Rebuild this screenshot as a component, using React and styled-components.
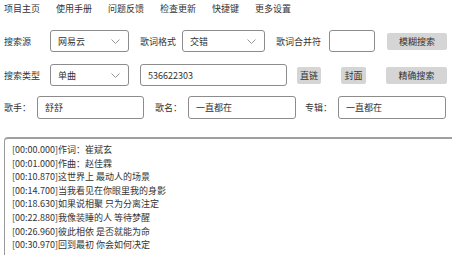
import React from "react"
import styled, { createGlobalStyle } from "styled-components"

const Global = createGlobalStyle`
body {
  margin: 0;
  background: #ffffff;
  overflow: hidden;
  font-family: "Noto Sans CJK SC", "Noto Sans", sans-serif;
  color: #333333;
}
`

const Page = styled.div`
width: 452px;
height: 255px;
overflow: hidden;
`

const Menu = styled.div`
display: flex;
gap: 16px;
padding-left: 4px;
height: 16px;
align-items: center;
font-size: 9px;
`

const Row = styled.div`
display: flex;
align-items: center;
padding-left: 4px;
height: ${p => p.h || 22}px;
margin-top: ${p => p.top}px;
`

const Label = styled.span`
width: ${p => p.w}px;
flex-shrink: 0;
font-size: 9px;
color: #333;
`

const SelectBox = styled.div`
box-sizing: border-box;
width: ${p => p.w}px;
height: 100%;
border: 1px solid #8c8c8c;
border-radius: 3px;
display: flex;
align-items: center;
justify-content: space-between;
padding: 0 8px 0 7px;
font-size: 9px;
margin-right: ${p => p.mr || 0}px;
flex-shrink: 0;
`

const Input = styled.div`
box-sizing: border-box;
width: ${p => p.w}px;
height: 100%;
border: 1px solid #8c8c8c;
border-radius: 3px;
display: flex;
align-items: center;
padding-left: 7px;
font-size: 9px;
margin-right: ${p => p.mr || 0}px;
flex-shrink: 0;
`

const Button = styled.div`
box-sizing: border-box;
width: ${p => p.w}px;
height: 17px;
background: #d5d5d5;
border-radius: 2px;
display: flex;
align-items: center;
justify-content: center;
font-size: 9px;
color: #333;
margin-right: ${p => p.mr || 0}px;
flex-shrink: 0;
`

const Lyrics = styled.div`
box-sizing: border-box;
margin: 18px 0 0 4px;
width: 460px;
height: 140px;
border: 1px solid #9a9a9a;
border-top: 2px solid #a0a0a0;
border-radius: 4px;
padding: 4px 0 0 7px;
font-size: 9px;
line-height: 13.6px;
color: #333;
`

const Chevron = () => (
  <svg width="9" height="5" viewBox="0 0 9 5">
    <path d="M0.5 0.5 L4.5 4.5 L8.5 0.5" fill="none" stroke="#8a8a8a" strokeWidth="0.9" />
  </svg>
)

const Select = ({ w, mr, children }) => (
  <SelectBox w={w} mr={mr}>
    <span>{children}</span>
    <Chevron />
  </SelectBox>
)

const lines = [
  "[00:00.000]作词：崔斌玄",
  "[00:01.000]作曲：赵佳霖",
  "[00:10.870]这世界上 最动人的场景",
  "[00:14.700]当我看见在你眼里我的身影",
  "[00:18.630]如果说相聚 只为分离注定",
  "[00:22.880]我像装睡的人 等待梦醒",
  "[00:26.960]彼此相依 是否就能为命",
  "[00:30.970]回到最初 你会如何决定",
]

export default function App() {
  return (
    <Page>
      <Global />
      <Menu>
        <span>项目主页</span>
        <span>使用手册</span>
        <span>问题反馈</span>
        <span>检查更新</span>
        <span>快捷键</span>
        <span>更多设置</span>
      </Menu>

      <Row top={14}>
        <Label w={46}>搜索源</Label>
        <Select w={79} mr={11}>网易云</Select>
        <Label w={42}>歌词格式</Label>
        <Select w={83} mr={11}>交错</Select>
        <Label w={53}>歌词合并符</Label>
        <Input w={46} mr={12} />
        <Button w={60}>模糊搜索</Button>
      </Row>

      <Row top={12}>
        <Label w={46}>搜索类型</Label>
        <Select w={79} mr={11}>单曲</Select>
        <Input w={147} mr={10}>536622303</Input>
        <Button w={24} mr={20}>直链</Button>
        <Button w={25} mr={20}>封面</Button>
        <Button w={61}>精确搜索</Button>
      </Row>

      <Row top={10} h={23}>
        <Label w={33}>歌手：</Label>
        <Input w={107} mr={11}>舒舒</Input>
        <Label w={33}>歌名：</Label>
        <Input w={108} mr={9}>一直都在</Input>
        <Label w={33}>专辑：</Label>
        <Input w={108}>一直都在</Input>
      </Row>

      <Lyrics>
        {lines.map((l, i) => (
          <div key={i}>{l}</div>
        ))}
      </Lyrics>
    </Page>
  )
}
